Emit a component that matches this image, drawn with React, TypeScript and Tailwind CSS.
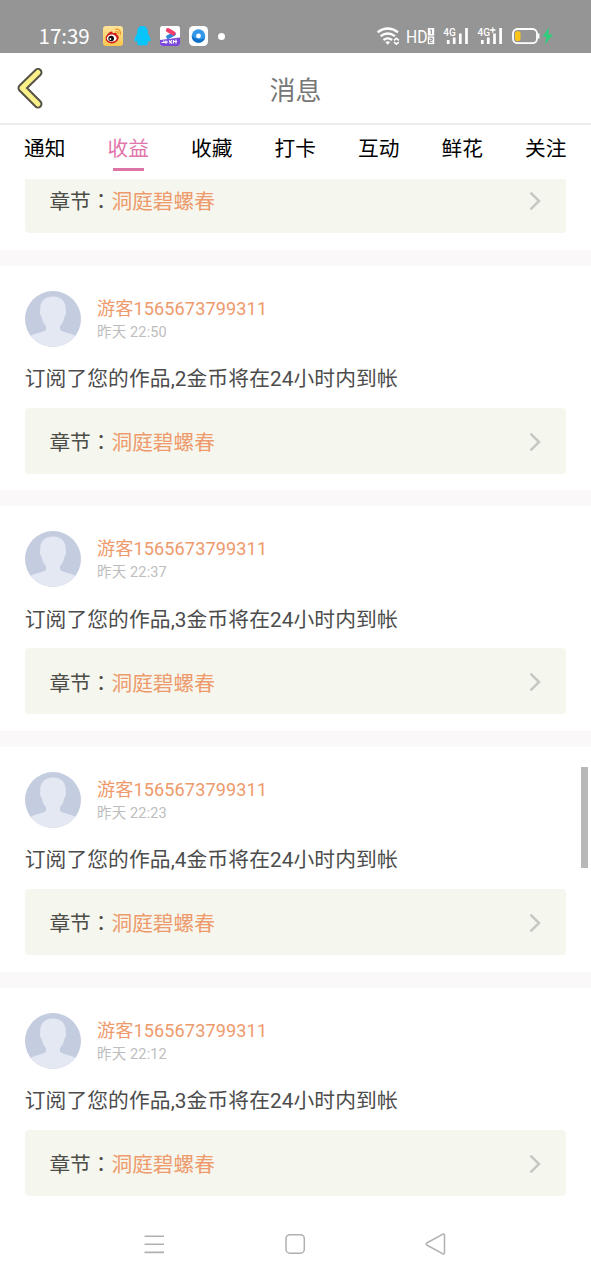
const tabs = ['通知', '收益', '收藏', '打卡', '互动', '鲜花', '关注'];

const messages = [
  { time: '22:50', coins: 2 },
  { time: '22:37', coins: 3 },
  { time: '22:23', coins: 4 },
  { time: '22:12', coins: 3 },
];

function AppIcons() {
  return (
    <div className="flex items-center">
      <svg className="h-5 w-5" viewBox="0 0 20 20">
        <defs>
          <linearGradient id="wb" x1="0" y1="0" x2="0" y2="1">
            <stop offset="0" stopColor="#ffe59b" />
            <stop offset="1" stopColor="#fbc64c" />
          </linearGradient>
        </defs>
        <rect width="20" height="20" rx="3" fill="url(#wb)" />
        <path d="M2.600 12.300C2.600 9.500 6.600 5 8.800 5.400c1 .2.9 1.200.7 1.900 2-.9 4.600-.9 4.300 1.300 0 .6 1.900.6 1.900 2.600 0 3.300-3.300 6.200-6.700 6.200-3.400 0-6.400-1.800-6.400-5.100z" fill="#cf1f1d" />
        <ellipse cx="8.700" cy="12.200" rx="4.800" ry="3.600" fill="#fff" />
        <circle cx="8.200" cy="12.500" r="2.800" fill="#111" />
        <circle cx="7.400" cy="13" r=".9" fill="#fff" />
        <path d="M12.700 3.200c3-.6 5.500 2 4.600 5M13 5.700c1.600-.3 2.600.8 2.200 2.200" fill="none" stroke="#f0952b" strokeWidth="1.300" strokeLinecap="round" />
      </svg>
      <svg className="ml-[10.500px] h-5 w-[17px]" viewBox="0 0 17 20">
        <path d="M8.500 0C5 0 3.200 2.600 3.200 6c0 2-.7 2.700-1.600 4.300C.3 12.700.1 15 .9 15.400c.6.2 1.300-.4 1.700-.6.2 1 .8 1.600 1.200 2.100-.7.500-.9 1-.6 1.600.5 1 3.800 1 5.300.8 1.500.2 4.800.2 5.300-.8.3-.6.1-1.100-.6-1.600.4-.5 1-1.100 1.200-2.100.4.2 1.100.8 1.700.6.8-.4.6-2.700-.7-5.100-.9-1.600-1.600-2.300-1.600-4.300C13.800 2.600 12 0 8.500 0z" fill="#07c5fb" />
      </svg>
      <svg className="ml-[9.500px] h-5 w-5" viewBox="0 0 20 20">
        <rect width="20" height="20" rx="2.500" fill="#fff" />
        <path d="M0 14 20 11.500v6a2.500 2.500 0 0 1-2.500 2.500h-15A2.500 2.500 0 0 1 0 17.500z" fill="#7a48d8" />
        <path d="M14 8 8 11" stroke="#2d87d8" strokeWidth="3.800" strokeLinecap="round" />
        <path d="M8 4.200 13.500 7.300" stroke="#f53d6b" strokeWidth="4.200" strokeLinecap="round" />
        <path d="M1.500 16.500h3l-1-2M6 14.500v3.300M5 16h3M9 14.500l3 3M12 14l-2.500 3.500M13.500 14v3.500M13 15.500h4M16 13.500v4" stroke="#fff" strokeWidth="1.100" fill="none" />
      </svg>
      <svg className="ml-[9px] h-5 w-[19px]" viewBox="0 0 19 20">
        <rect width="19" height="20" rx="4.500" fill="#fff" />
        <circle cx="9.500" cy="10" r="6.800" fill="#3298e8" />
        <path d="M2.700 10A6.800 6.800 0 0 0 16 12 11 11 0 0 1 2.700 10z" fill="#126fc8" />
        <circle cx="9.500" cy="9.900" r="2.400" fill="#fff" />
      </svg>
      <span className="ml-[10px] h-[7px] w-[7px] rounded-full bg-white" />
    </div>
  );
}

function StatusIcons() {
  return (
    <svg className="h-[26px] w-[180px]" viewBox="375 23 180 26" fill="none">
      <g stroke="#fff" strokeWidth="2.300">
        <path d="M377.600 32.300q10.200-7.500 20.400 0M380.600 36.200q7.200-5.500 14.400 0M383.500 40q4.300-3.300 8.600 0" />
        <path d="m387.700 44.700-2.400-2.700q2.400-1.700 4.800 0z" fill="#fff" stroke="none" />
        <path d="m394 40.300 2.400-2 2.400 2M394 42.200l2.400 2 2.400-2" strokeWidth="1.600" />
      </g>
      <text x="406" y="43.200" fill="#fff" fontSize="19" fontFamily="Roboto, sans-serif" textLength="21.500" lengthAdjust="spacingAndGlyphs" fontWeight="400">HD</text>
      <rect x="427.800" y="28" width="6.400" height="7.600" fill="#fff" />
      <rect x="427.800" y="36.500" width="6.400" height="7.600" fill="#fff" />
      <path d="M430 30h1.300v4M429.500 38.300h2.700v2h-2.700v2h3" stroke="#777" strokeWidth=".9" />
      <g fill="#fff" fontFamily="Roboto, sans-serif" fontSize="11.500" fontWeight="500">
        <text x="443.300" y="36.200" textLength="12.500" lengthAdjust="spacingAndGlyphs">4G</text>
        <text x="477.500" y="36.200" textLength="12.500" lengthAdjust="spacingAndGlyphs">4G</text>
      </g>
      <path d="M490 30h5.500M492.800 27.300v5.500" stroke="#fff" strokeWidth="1.300" />
      <path d="M448.200 40v4M454.200 37.500v6.500M460.300 33.500V44M466.500 28v16M482.300 40v4M488.300 37.500v6.500M494.500 33.500V44M500.600 28v16" stroke="#fff" strokeWidth="2.700" />
      <rect x="513" y="29" width="24" height="14.200" rx="4.500" stroke="#fff" strokeWidth="1.800" />
      <path d="M538.700 33.500v5" stroke="#fff" strokeWidth="1.500" />
      <rect x="515" y="31.300" width="5.500" height="9.600" rx="2" fill="#fcc419" />
      <path d="m549 27.500-6.500 9.300h4l-1.500 7.700 8-10h-4.500z" fill="#2fce7c" />
    </svg>
  );
}

function Avatar() {
  return (
    <svg className="h-[56px] w-[56px] shrink-0" viewBox="0 0 56 56">
      <defs>
        <clipPath id="round"><circle cx="28" cy="28" r="28" /></clipPath>
      </defs>
      <g clipPath="url(#round)">
        <rect width="56" height="56" fill="#c4cce0" />
        <path d="M28 5.500c-8.500 0-13.500 5.500-12.700 14-.8 1-.4 4.500 1.200 6 .8 4.500 2.300 7.500 4.500 9.500v3.500c-1 2.800-12 3.500-17.500 7.500V58h49V46c-5.500-4-16.500-4.700-17.500-7.500V35c2.200-2 3.700-5 4.500-9.500 1.600-1.500 2-5 1.200-6 .8-8.500-4.200-14-12.700-14z" fill="#e3e8f2" />
      </g>
    </svg>
  );
}

function Chapter() {
  return (
    <div className="flex h-[66px] items-center justify-between rounded-[4px] bg-[#f5f6ed] pl-[24.700px] pr-[25px]">
      <p className="pt-[2.500px] text-[20.700px] leading-[30px] text-[#4c4c48]">
        章节<span className="font-['Noto_Sans_CJK_TC',sans-serif]">：</span>
        <span className="text-[#ee9a6c]">洞庭碧螺春</span>
      </p>
      <svg className="mt-[2px] h-5 w-3" viewBox="0 0 12 20" fill="none">
        <path d="m1.500 1.700 8.500 8.300-8.500 8.300" stroke="#c6c7c0" strokeWidth="2.500" />
      </svg>
    </div>
  );
}

function Message({ time, coins }: { time: string; coins: number }) {
  return (
    <article className="h-[240.700px] border-t-[16.400px] border-[#faf8f9] px-[24.700px]">
      <div className="mt-[25px] flex h-[56px]">
        <Avatar />
        <div className="ml-[16.300px] pt-[6.300px]">
          <div className="text-[18.100px] leading-[24px] tracking-[0.120px] text-[#ee9a6c]">游客1565673799311</div>
          <div className="text-[14.500px] leading-[23px] tracking-[0.150px] text-[#bdbdbd]">昨天 {time}</div>
        </div>
      </div>
      <p className="flex h-[61.300px] items-center whitespace-nowrap pt-[4.500px] text-[20.750px] tracking-[0.100px] text-[#4c4c4c]">
        订阅了您的作品,{coins}金币将在24小时内到帐
      </p>
      <Chapter />
    </article>
  );
}

export default function App() {
  return (
    <div className="relative flex h-[1280px] w-[591px] flex-col overflow-hidden bg-white font-['Roboto','Noto_Sans_CJK_SC',sans-serif]">
      <div className="flex h-[52.500px] shrink-0 items-start justify-between bg-[#959595] pl-[38.500px] pr-[36px] pt-[23px]">
        <div className="flex h-[26px] items-center">
          <span className="mb-[2px] w-[64.500px] font-['Noto_Sans_CJK_SC',sans-serif] text-[20.500px] leading-[26px] text-white">17:39</span>
          <AppIcons />
        </div>
        <StatusIcons />
      </div>

      <header className="grid h-[72.500px] shrink-0 grid-cols-[80px_1fr_80px] items-center border-b-2 border-[#ececec]">
        <svg className="ml-4 h-[42px] w-7" viewBox="0 0 28 42" fill="none" strokeLinecap="round" strokeLinejoin="round">
          <path d="M22 5.500 6 21 22 37" stroke="#555247" strokeWidth="9" />
          <path d="M22 5.500 6 21 22 37" stroke="#fcf089" strokeWidth="5" />
        </svg>
        <h1 className="pt-[6px] text-center text-[26px] leading-9 text-[#777]">消息</h1>
      </header>

      <nav className="flex h-[54px] shrink-0 justify-between pl-[24px] pr-[24.500px]">
        {tabs.map((tab) => (
          <div
            key={tab}
            className={
              tab === '收益'
                ? 'flex flex-col items-center text-[20.700px] text-[#e276ab]'
                : 'flex flex-col items-center text-[20.700px] text-black'
            }
          >
            <span className="mt-[9px] leading-[30px]">{tab}</span>
            {tab === '收益' && <span className="mt-[4px] h-[3px] w-[31px] bg-[#dc74a6]" />}
          </div>
        ))}
      </nav>

      <main className="h-[1032px] shrink-0 overflow-hidden">
        <div className="-mt-[12px] mb-[16.500px] px-[24.700px]">
          <Chapter />
        </div>
        {messages.map((m) => (
          <Message key={m.time} time={m.time} coins={m.coins} />
        ))}
      </main>

      <div className="absolute right-[3px] top-[767px] h-[101px] w-[7px] bg-[#b8b8b8]" />

      <footer className="flex flex-1 items-center justify-between bg-white pb-[3px] pl-[143px] pr-[145px]">
        <svg className="h-6 w-6" viewBox="0 0 24 24" fill="none" stroke="#b0b0b0" strokeWidth="1.600">
          <path d="M1.500 4.200H21M1.500 12.200H21M1.500 20.400H21" />
        </svg>
        <svg className="h-6 w-6" viewBox="0 0 24 24" fill="none" stroke="#b0b0b0" strokeWidth="1.500">
          <rect x="3" y="2.700" width="18.300" height="18.500" rx="4" />
        </svg>
        <svg className="h-6 w-6" viewBox="0 0 24 24" fill="none" stroke="#b0b0b0" strokeWidth="1.500" strokeLinejoin="round">
          <path d="M20.500 2.300 4.700 11q-1.500 1 0 2L20.500 21.700q2 .8 2-1.200v-17q0-2-2-1.200z" />
        </svg>
      </footer>
    </div>
  );
}
